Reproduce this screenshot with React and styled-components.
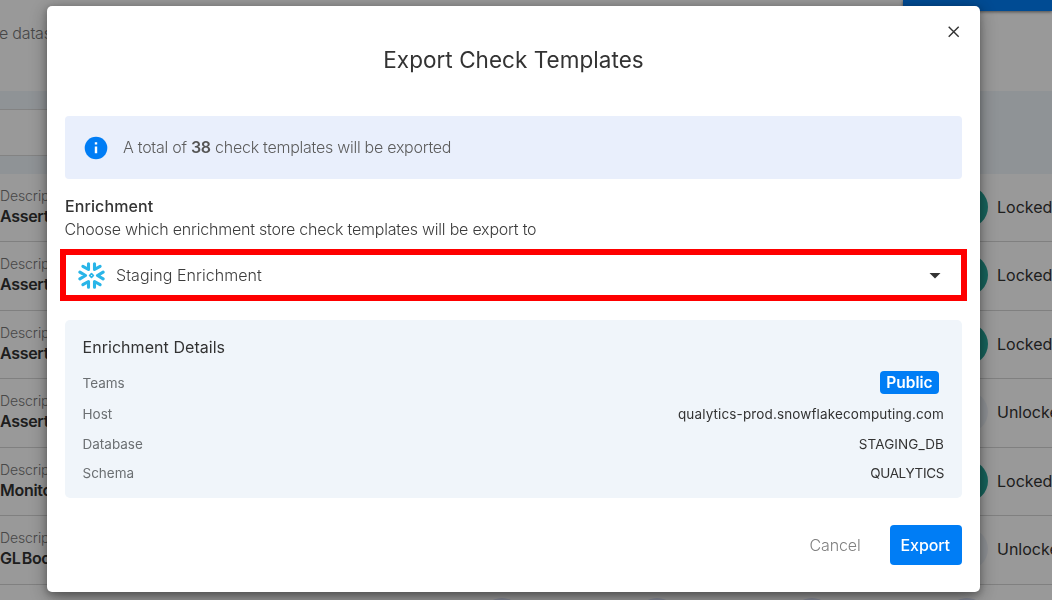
import React from "react";
import styled, { createGlobalStyle } from "styled-components";

const GlobalStyle = createGlobalStyle`
  * { box-sizing: border-box; }
  html, body { margin: 0; height: 600px; overflow: hidden; }
  body {
    font-family: Inter, "Liberation Sans", sans-serif;
    font-size: 16px;
    color: #333;
    background: #fff;
  }
  button { font-family: inherit; }
`;

const Page = styled.div`
  width: 1052px;
  height: 600px;
  overflow: hidden;
`;

const PageTop = styled.header`
  display: flex;
  justify-content: space-between;
  align-items: flex-start;
  height: 91px;
  background: #fff;
`;

const PageSubtitle = styled.p`
  margin: 23px 0 0 -1px;
  line-height: 21px;
  font-weight: 300;
  letter-spacing: -0.2px;
  color: #777;
  white-space: nowrap;
`;

const PrimaryBar = styled.div`
  width: 149px;
  height: 11px;
  background: #007df5;
  box-shadow: 0 1px 3px rgba(0, 0, 0, 0.5);
`;

const FilterBand = styled.div`
  height: 82.5px;
  padding: 18px 0;
  background: #eff5fa;
`;

const FilterInput = styled.div`
  width: 500px;
  height: 47px;
  background: #fff;
  border: 1px solid #dadada;
  border-left: 0;
`;

const Row = styled.div`
  display: flex;
  justify-content: space-between;
  height: 68.5px;
  border-bottom: 1px solid #d6d6d6;
  white-space: nowrap;
`;

const CheckInfo = styled.div`
  padding-top: 12.2px;
`;

const CheckLabel = styled.div`
  font-size: 14px;
  line-height: 20px;
  font-weight: 300;
  letter-spacing: -0.1px;
  color: #777;
`;

const CheckValue = styled.div`
  font-size: 16px;
  line-height: 21px;
  font-weight: 600;
  letter-spacing: -0.3px;
  word-spacing: -2.5px;
`;

const Status = styled.div`
  display: flex;
  align-items: center;
  gap: 9px;
  width: 106px;
  height: 66px;
`;

const StatusDot = styled.span`
  flex: none;
  width: 42px;
  height: 42px;
  border-radius: 50%;
  background: ${(p) => (p.$locked ? "#26a69a" : "#eef3f9")};
`;

const PartialRow = styled.div`
  display: flex;
  height: 68px;
  padding: 13px 0 0 481px;
  gap: 113px;
`;

const TagDot = styled.span`
  flex: none;
  width: 42px;
  height: 42px;
  border-radius: 50%;
  background: #dde3fa;
`;

const Scrim = styled.div`
  position: fixed;
  inset: 0;
  padding: 6px 72px 8px 47px;
  background: rgba(0, 0, 0, 0.4);
`;

const Dialog = styled.section`
  position: relative;
  display: flex;
  flex-direction: column;
  width: 933px;
  height: 586px;
  padding: 0 18px;
  border-radius: 5px;
  background: #fff;
  box-shadow: 0 11px 15px -7px rgba(0, 0, 0, 0.2),
    0 4px 18px 3px rgba(0, 0, 0, 0.22), 0 2px 6px 1px rgba(0, 0, 0, 0.22);
`;

const CloseButton = styled.button`
  position: absolute;
  top: 18px;
  right: 18.5px;
  width: 16px;
  height: 16px;
  padding: 0;
  border: 0;
  background: none;
  svg { display: block; }
`;

const Title = styled.h1`
  margin: 39px 0 0;
  line-height: 30px;
  font-size: 22.5px;
  font-weight: 400;
  letter-spacing: 0.04px;
  text-align: center;
`;

const Notice = styled.div`
  display: flex;
  align-items: center;
  gap: 15px;
  height: 63px;
  margin-top: 41px;
  padding-left: 19px;
  border-radius: 4px;
  background: #e9effc;
  font-weight: 300;
  letter-spacing: -0.26px;
  color: #5c5c5c;
  span { padding-bottom: 2px; }
  strong { font-weight: 600; color: #555; }
`;

const FieldTitle = styled.h2`
  margin: 16px 0 0;
  font-size: 16px;
  line-height: 22px;
  font-weight: 500;
  letter-spacing: 0.1px;
`;

const FieldHint = styled.p`
  margin: 1px 0 0 -0.5px;
  font-size: 16px;
  line-height: 22px;
  font-weight: 300;
  letter-spacing: -0.22px;
  color: #3c3c3c;
`;

const Select = styled.div`
  display: flex;
  align-items: center;
  height: 52px;
  margin: 9px -5px 0 -5px;
  padding: 0 20.5px 0 11.5px;
  border: 6px solid #fe0000;
  font-weight: 300;
  letter-spacing: 0.04px;
  color: #3c3c3c;
`;

const SelectValue = styled.span`
  flex: 1;
  margin-left: 10.5px;
`;

const Details = styled.div`
  height: 178px;
  margin-top: 19px;
  padding: 16px 18px 0 17.5px;
  border-radius: 5px;
  background: #f0f5fa;
`;

const DetailsTitle = styled.h3`
  margin: 0 0 8px;
  font-size: 16px;
  line-height: 22px;
  font-weight: 400;
  letter-spacing: 0.05px;
`;

const DetailRow = styled.div`
  display: flex;
  align-items: center;
  justify-content: space-between;
  height: ${(p) => p.$h}px;
  font-size: 13.5px;
`;

const DetailLabel = styled.span`
  color: #6b6f72;
`;

const DetailValue = styled.span`
  letter-spacing: ${(p) => p.$ls};
`;

const Badge = styled.span`
  width: 59px;
  height: 23px;
  margin-right: 5px;
  border-radius: 4px;
  background: #007df5;
  color: #fff;
  font-size: 15.5px;
  line-height: 23px;
  font-weight: 600;
  text-align: center;
`;

const Actions = styled.footer`
  display: flex;
  justify-content: flex-end;
  gap: 18px;
  margin-top: 27px;
`;

const Button = styled.button`
  height: 40px;
  width: ${(p) => (p.$primary ? "72px" : "74px")};
  padding: ${(p) => (p.$primary ? "0 1.5px 0 0" : "0")};
  border: 0;
  border-radius: 4px;
  font-size: 16px;
  font-weight: ${(p) => (p.$primary ? 500 : 300)};
  letter-spacing: -0.1px;
  background: ${(p) => (p.$primary ? "#007df5" : "transparent")};
  color: ${(p) => (p.$primary ? "#fff" : "#808080")};
`;

const InfoIcon = () => (
  <svg width="24" height="24" viewBox="0 0 24 24">
    <circle cx="12" cy="12" r="11.3" fill="#007df5" />
    <path d="M12 6.2v2.4M12 10.6v6.7" stroke="#fff" strokeWidth="2.4" />
  </svg>
);

const SnowflakeIcon = () => (
  <svg width="28" height="28" viewBox="-13.5 -14.5 28 28" fill="none" stroke="#29b5e8" strokeWidth="3.1" strokeLinecap="round" strokeLinejoin="round">
    <path d="M-3 -11.8V-6L-8.6 -9.2M3 -11.8V-6L8.6 -9.2" />
    <path d="M-3 11.8V6L-8.6 9.2M3 11.8V6L8.6 9.2" />
    <path d="M-11.6 -3.4L-6 0L-11.6 3.4M11.6 -3.4L6 0L11.6 3.4" />
    <path d="M0 -1.9L1.9 0L0 1.9L-1.9 0Z" strokeWidth="1.7" />
  </svg>
);

const CloseIcon = () => (
  <svg width="16" height="16" viewBox="0 0 16 16" stroke="#333" strokeWidth="1.4">
    <path d="M2.7 2.8L12.7 12.8M12.7 2.8L2.7 12.8" />
  </svg>
);

const CaretIcon = () => (
  <svg width="12" height="7" viewBox="0 0 12 7">
    <path d="M0.5 1H11.5L6 6.6Z" fill="#333" />
  </svg>
);

const rows = [
  { value: "Assert", locked: true },
  { value: "Assert", locked: true },
  { value: "Assert", locked: true },
  { value: "Assert", locked: false },
  { value: "Monitor", locked: true },
  { value: "GL Book", locked: false },
];

const details = [
  { label: "Host", value: "qualytics-prod.snowflakecomputing.com", ls: "0.13px", h: 30 },
  { label: "Database", value: "STAGING_DB", ls: "0.1px", h: 29 },
  { label: "Schema", value: "QUALYTICS", ls: "-0.35px", h: 30 },
];

export default function App() {
  return (
    <>
      <GlobalStyle />
      <Page>
        <PageTop>
          <PageSubtitle>e datas</PageSubtitle>
          <PrimaryBar />
        </PageTop>
        <FilterBand>
          <FilterInput />
        </FilterBand>
        {rows.map((row, i) => (
          <Row key={i}>
            <CheckInfo>
              <CheckLabel>Descrip</CheckLabel>
              <CheckValue>{row.value}</CheckValue>
            </CheckInfo>
            <Status>
              <StatusDot $locked={row.locked} />
              {row.locked ? "Locked" : "Unlocked"}
            </Status>
          </Row>
        ))}
        <PartialRow>
          <TagDot />
          <TagDot />
          <TagDot />
          <TagDot />
        </PartialRow>
      </Page>
      <Scrim>
        <Dialog role="dialog">
          <CloseButton aria-label="Close">
            <CloseIcon />
          </CloseButton>
          <Title>Export Check Templates</Title>
          <Notice>
            <InfoIcon />
            <span>
              A total of <strong>38</strong> check templates will be exported
            </span>
          </Notice>
          <FieldTitle>Enrichment</FieldTitle>
          <FieldHint>Choose which enrichment store check templates will be export to</FieldHint>
          <Select>
            <SnowflakeIcon />
            <SelectValue>Staging Enrichment</SelectValue>
            <CaretIcon />
          </Select>
          <Details>
            <DetailsTitle>Enrichment Details</DetailsTitle>
            <DetailRow $h={33}>
              <DetailLabel>Teams</DetailLabel>
              <Badge>Public</Badge>
            </DetailRow>
            {details.map((d) => (
              <DetailRow key={d.label} $h={d.h}>
                <DetailLabel>{d.label}</DetailLabel>
                <DetailValue $ls={d.ls}>{d.value}</DetailValue>
              </DetailRow>
            ))}
          </Details>
          <Actions>
            <Button>Cancel</Button>
            <Button $primary>Export</Button>
          </Actions>
        </Dialog>
      </Scrim>
    </>
  );
}
